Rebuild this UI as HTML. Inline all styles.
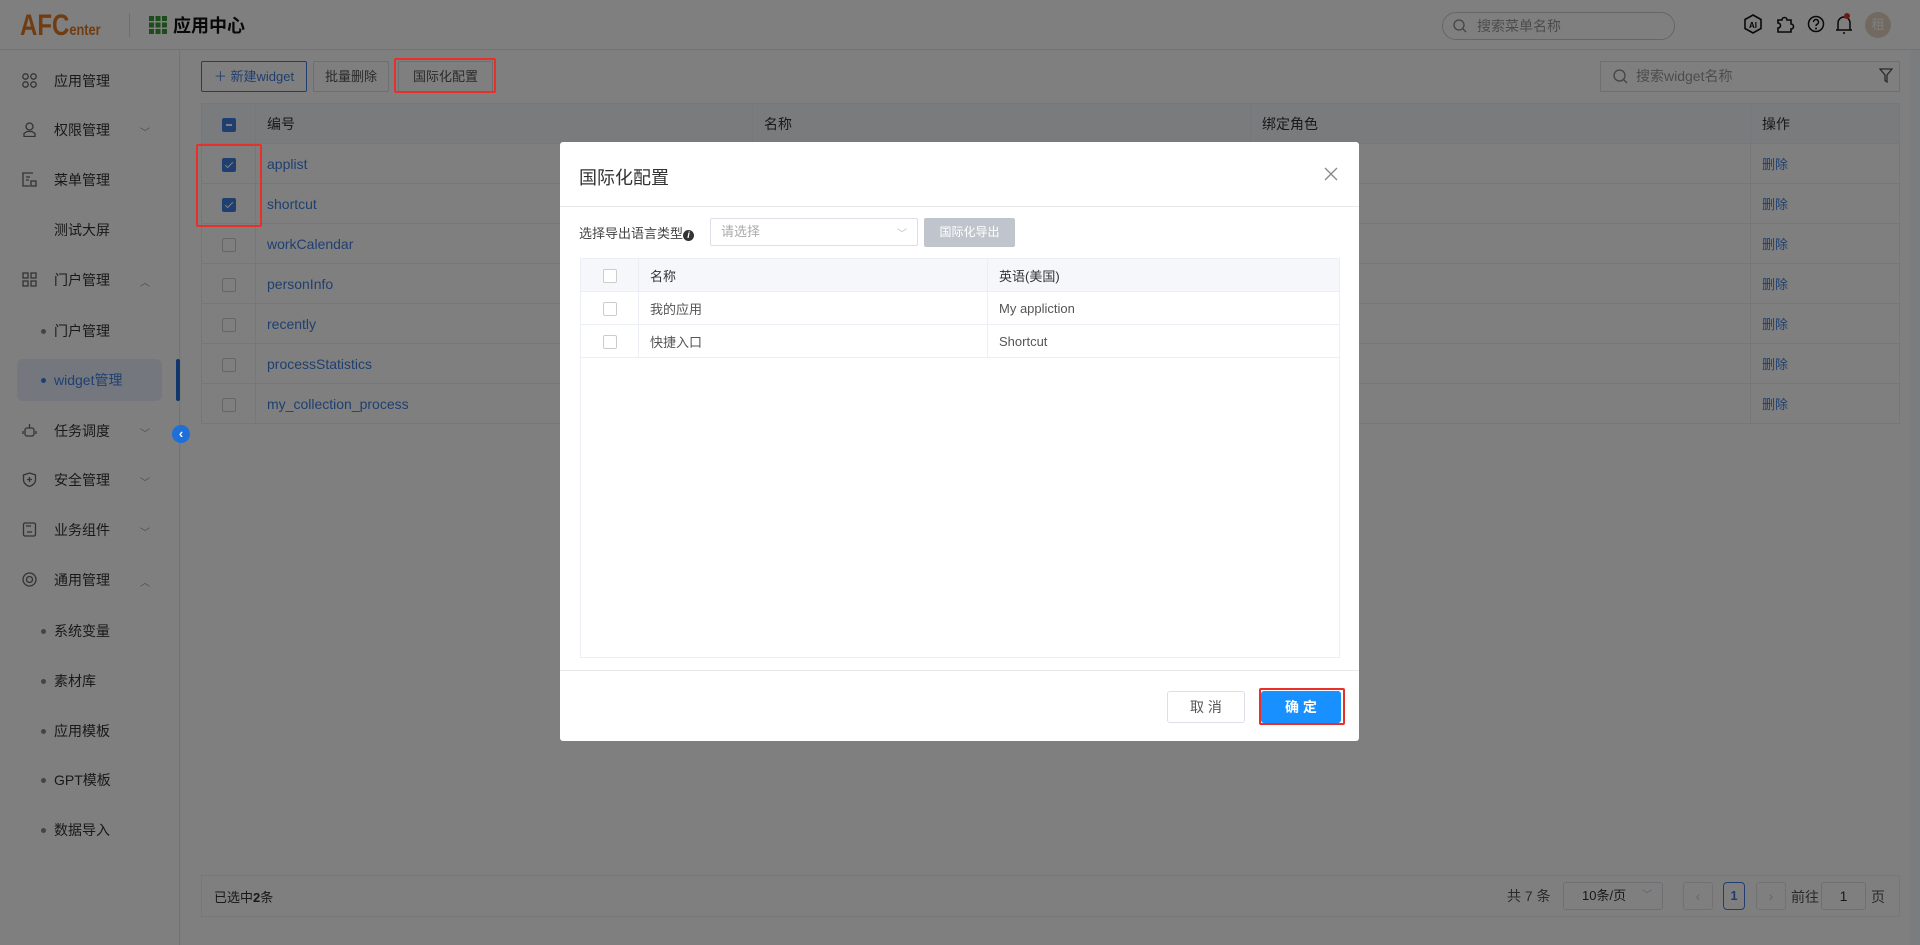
<!DOCTYPE html>
<html><head><meta charset="utf-8"><style>
*{box-sizing:border-box;margin:0;padding:0}
body{width:1920px;height:945px;overflow:hidden;font-family:"Liberation Sans","Noto Sans CJK SC",sans-serif;font-size:14px;color:#333;background:#f7f8fa;position:relative}
.abs{position:absolute}
.hdr{left:0;top:0;width:1920px;height:50px;background:#fff;border-bottom:1px solid #e4e4e4}
.side{left:0;top:50px;width:180px;height:895px;background:#fff;border-right:1px solid #e8e8e8}
.mi{position:absolute;left:0;width:180px;height:30px;line-height:30px;font-size:14px;color:#333}
.mi .t{position:absolute;left:54px}
.mi .ic{position:absolute;left:22px;top:7px;width:15px;height:15px}
.mi .ch{position:absolute;left:140px;top:4px;font-size:10px;color:#999}
.sub .t{left:54px}
.sub .d{position:absolute;left:41px;top:13px;width:5px;height:5px;border-radius:50%;background:#888}
.card{left:181px;top:50px;width:1729px;height:895px;background:#fff}
.btn{position:absolute;top:61px;height:31px;border:1px solid #dcdfe6;background:#fff;font-size:13px;line-height:29px;text-align:center;color:#555;border-radius:2px}
table{border-collapse:collapse;position:absolute}
.mt{left:201px;top:103px;width:1699px}
.mt td{height:40px;border:1px solid #ebeef5;padding-left:11px;font-size:14px}
.mt tr:first-child td{background:#f5f7fa;color:#333}
.mt td.c{padding:0;text-align:center;width:54px}
.cb{display:inline-block;width:14px;height:14px;border:1px solid #ccc;border-radius:2px;background:#fff;vertical-align:middle;position:relative}
.cb.on{background:#3f7fe0;border-color:#3f7fe0}
.cb.on:after{content:"";position:absolute;left:4px;top:1px;width:3px;height:7px;border:solid #fff;border-width:0 1.5px 1.5px 0;transform:rotate(45deg)}
.cb.ind{background:#3f7fe0;border-color:#3f7fe0}
.cb.ind:after{content:"";position:absolute;left:3px;top:5.5px;width:6px;height:1.5px;background:#fff}
.lk{color:#3f7fe0}
.ov{left:0;top:0;width:1920px;height:945px;background:rgba(0,0,0,.5)}
.red{position:absolute;border:2px solid #e8302a;border-radius:2px}
.modal{left:560px;top:142px;width:799px;height:599px;background:#fff;border-radius:3px}
.modal .mtb{left:20px;top:116px;width:760px;height:400px;border:1px solid #ebeef5}
.mtb2 td{height:33px;border:1px solid #ebeef5;padding-left:11px;font-size:13px;color:#555}
.mtb2 tr:first-child td{background:#f5f7fa;color:#333}
</style></head><body>
<div class="abs hdr">
 <div class="abs" style="left:20px;top:9px;font-size:30px;font-weight:bold;color:#e07a26;transform:scaleX(.8);transform-origin:left top;font-family:'Liberation Sans Narrow','Liberation Sans',sans-serif">AFC<span style="font-size:16px">enter</span></div>
 <div class="abs" style="left:129px;top:13px;width:1px;height:24px;background:#ddd"></div>
 <svg class="abs" style="left:149px;top:16px" width="18" height="18"><g fill="#3a9a3a"><rect x="0" y="0" width="5" height="5"/><rect x="6.5" y="0" width="5" height="5"/><rect x="13" y="0" width="5" height="5"/><rect x="0" y="6.5" width="5" height="5"/><rect x="6.5" y="6.5" width="5" height="5"/><rect x="13" y="6.5" width="5" height="5"/><rect x="0" y="13" width="5" height="5"/><rect x="6.5" y="13" width="5" height="5"/><rect x="13" y="13" width="5" height="5"/></g></svg>
 <div class="abs" style="left:173px;top:12px;font-size:18px;font-weight:bold;color:#111">应用中心</div>
 <div class="abs" style="left:1442px;top:12px;width:233px;height:28px;border:1px solid #ccc;border-radius:14px;font-size:14px;color:#999;line-height:26px;padding-left:34px">搜索菜单名称
  <svg class="abs" style="left:10px;top:6px" width="14" height="14"><circle cx="6" cy="6" r="5" fill="none" stroke="#888" stroke-width="1.3"/><path d="M10 10l3 3" stroke="#888" stroke-width="1.3"/></svg></div>
 <svg class="abs" style="left:1743px;top:14px" width="20" height="20"><path d="M10 1l8 4.5v9L10 19 2 14.5v-9z" fill="none" stroke="#111" stroke-width="1.6"/><text x="10" y="14" font-size="8" text-anchor="middle" font-family="Liberation Sans" font-weight="bold">AI</text></svg>
 <svg class="abs" style="left:1775px;top:14px" width="20" height="20"><path d="M3 6h4a2.5 2.5 0 1 1 5 0h4v4a2.5 2.5 0 1 1 0 5v3H3v-4a2.5 2.5 0 1 0 0-5z" fill="none" stroke="#111" stroke-width="1.6"/></svg>
 <svg class="abs" style="left:1807px;top:15px" width="18" height="18"><circle cx="9" cy="9" r="7.5" fill="none" stroke="#111" stroke-width="1.5"/><path d="M6.5 7a2.5 2.5 0 1 1 3.5 2.3c-.8.4-1 .9-1 1.7" fill="none" stroke="#111" stroke-width="1.5"/><circle cx="9" cy="13.5" r="1" fill="#111"/></svg>
 <svg class="abs" style="left:1835px;top:12px" width="18" height="24"><path d="M3 18V11a6 6 0 0 1 12 0v7M1 18h16M8 21h2" fill="none" stroke="#111" stroke-width="1.5"/><circle cx="12" cy="4" r="3" fill="#e0302a"/></svg>
 <div class="abs" style="left:1865px;top:12px;width:26px;height:26px;border-radius:50%;background:#e5d3c3;color:#fff;font-size:13px;text-align:center;line-height:26px">租</div>
</div>
<div class="abs side">
 <div class="mi" style="top:16px"><svg class="ic"><g fill="none" stroke="#666" stroke-width="1.3"><circle cx="3.5" cy="3.5" r="2.7"/><circle cx="11.5" cy="3.5" r="2.7"/><circle cx="3.5" cy="11.5" r="2.7"/><circle cx="11.5" cy="11.5" r="2.7"/></g></svg><span class="t">应用管理</span></div>
 <div class="mi" style="top:65px"><svg class="ic"><g fill="none" stroke="#666" stroke-width="1.3"><circle cx="7.5" cy="4.5" r="3.5"/><path d="M2 14.5v-3l3-2h5l3 2v3z"/></g></svg><span class="t">权限管理</span><span class="ch">﹀</span></div>
 <div class="mi" style="top:115px"><svg class="ic"><g fill="none" stroke="#666" stroke-width="1.3"><path d="M11 1H1v13h7M4 5h4M4 8h3"/><rect x="9" y="9" width="5" height="5"/></g></svg><span class="t">菜单管理</span></div>
 <div class="mi" style="top:165px"><span class="t">测试大屏</span></div>
 <div class="mi" style="top:215px"><svg class="ic"><g fill="none" stroke="#666" stroke-width="1.3"><rect x="1" y="1" width="5" height="5"/><rect x="9" y="1" width="5" height="5"/><rect x="1" y="9" width="5" height="5"/><rect x="9" y="9" width="5" height="5"/></g></svg><span class="t">门户管理</span><span class="ch">︿</span></div>
 <div class="mi sub" style="top:266px"><span class="d"></span><span class="t">门户管理</span></div>
 <div class="abs" style="left:17px;top:309px;width:145px;height:42px;border-radius:6px;background:#e8f0fc"></div>
 <div class="abs" style="left:176px;top:309px;width:4px;height:42px;background:#1e6fd9;border-radius:2px"></div>
 <div class="mi sub" style="top:315px;color:#3f7fe0;width:160px"><span class="d" style="background:#3f7fe0"></span><span class="t">widget管理</span></div>
 <div class="mi" style="top:366px"><svg class="ic"><g fill="none" stroke="#666" stroke-width="1.3"><rect x="3" y="5" width="9" height="8" rx="2"/><path d="M7.5 1v4M1 8v3M14 8v3"/></g></svg><span class="t">任务调度</span><span class="ch">﹀</span></div>
 <div class="mi" style="top:415px"><svg class="ic"><g fill="none" stroke="#666" stroke-width="1.3"><path d="M7.5 1l6 2v5c0 3-3 5.5-6 6.5-3-1-6-3.5-6-6.5V3z M7.5 5v5M5 7.5h5"/></g></svg><span class="t">安全管理</span><span class="ch">﹀</span></div>
 <div class="mi" style="top:465px"><svg class="ic"><g fill="none" stroke="#666" stroke-width="1.3"><rect x="1.5" y="1" width="12" height="13" rx="1.5"/><path d="M4 4h5M5 10h5"/></g></svg><span class="t">业务组件</span><span class="ch">﹀</span></div>
 <div class="mi" style="top:515px"><svg class="ic"><g fill="none" stroke="#666" stroke-width="1.3"><circle cx="7.5" cy="7.5" r="6.5"/><circle cx="7.5" cy="7.5" r="3"/></g></svg><span class="t">通用管理</span><span class="ch">︿</span></div>
 <div class="mi sub" style="top:566px"><span class="d"></span><span class="t">系统变量</span></div>
 <div class="mi sub" style="top:616px"><span class="d"></span><span class="t">素材库</span></div>
 <div class="mi sub" style="top:666px"><span class="d"></span><span class="t">应用模板</span></div>
 <div class="mi sub" style="top:715px"><span class="d"></span><span class="t">GPT模板</span></div>
 <div class="mi sub" style="top:765px"><span class="d"></span><span class="t">数据导入</span></div>
</div>
<div class="abs card"></div>
<div class="btn" style="left:201px;width:106px;border-color:#3f7fe0;color:#3f7fe0">＋ 新建widget</div>
<div class="btn" style="left:313px;width:76px">批量删除</div>
<div class="btn" style="left:398px;width:95px">国际化配置</div>
<div class="abs" style="left:1600px;top:61px;width:300px;height:31px;border:1px solid #dcdfe6;font-size:14px;color:#999;line-height:29px;padding-left:35px">搜索widget名称
 <svg class="abs" style="left:12px;top:7px" width="15" height="15"><circle cx="6.5" cy="6.5" r="5.5" fill="none" stroke="#888" stroke-width="1.3"/><path d="M10.5 10.5l3.5 3.5" stroke="#888" stroke-width="1.3"/></svg>
 <svg class="abs" style="left:278px;top:6px" width="14" height="16"><path d="M1 1h12l-5 6v7l-2-1.5V7z" fill="none" stroke="#555" stroke-width="1.3"/></svg></div>
<table class="mt">
<tr><td class="c"><span class="cb ind"></span></td><td style="width:497px">编号</td><td style="width:498px">名称</td><td style="width:500px">绑定角色</td><td>操作</td></tr>
<tr><td class="c"><span class="cb on"></span></td><td class="lk">applist</td><td></td><td></td><td class="lk" style="font-size:13px">删除</td></tr>
<tr><td class="c"><span class="cb on"></span></td><td class="lk">shortcut</td><td></td><td></td><td class="lk" style="font-size:13px">删除</td></tr>
<tr><td class="c"><span class="cb"></span></td><td class="lk">workCalendar</td><td></td><td></td><td class="lk" style="font-size:13px">删除</td></tr>
<tr><td class="c"><span class="cb"></span></td><td class="lk">personInfo</td><td></td><td></td><td class="lk" style="font-size:13px">删除</td></tr>
<tr><td class="c"><span class="cb"></span></td><td class="lk">recently</td><td></td><td></td><td class="lk" style="font-size:13px">删除</td></tr>
<tr><td class="c"><span class="cb"></span></td><td class="lk">processStatistics</td><td></td><td></td><td class="lk" style="font-size:13px">删除</td></tr>
<tr><td class="c"><span class="cb"></span></td><td class="lk">my_collection_process</td><td></td><td></td><td class="lk" style="font-size:13px">删除</td></tr>
</table>
<div class="abs" style="left:201px;top:875px;width:1699px;height:42px;border:1px solid #ebeef5"></div>
<div class="abs" style="left:214px;top:887px;font-size:13px">已选中<b>2</b>条</div>
<div class="abs" style="left:1507px;top:886px;font-size:14px;color:#555">共 7 条</div>
<div class="abs" style="left:1563px;top:882px;width:100px;height:28px;border:1px solid #dcdfe6;border-radius:3px;font-size:13px;line-height:26px;padding-left:18px">10条/页<span style="position:absolute;right:10px;color:#bbb;font-size:10px">﹀</span></div>
<div class="abs" style="left:1683px;top:882px;width:30px;height:28px;border:1px solid #e4e4e4;border-radius:3px;color:#ccc;text-align:center;line-height:26px">‹</div>
<div class="abs" style="left:1723px;top:882px;width:22px;height:28px;border:1px solid #3f7fe0;border-radius:4px;color:#3f7fe0;font-weight:bold;text-align:center;line-height:26px;font-size:13px">1</div>
<div class="abs" style="left:1756px;top:882px;width:30px;height:28px;border:1px solid #e4e4e4;border-radius:3px;color:#ccc;text-align:center;line-height:26px">›</div>
<div class="abs" style="left:1791px;top:887px;font-size:14px;color:#555">前往</div>
<div class="abs" style="left:1821px;top:882px;width:45px;height:28px;border:1px solid #dcdfe6;border-radius:3px;text-align:center;line-height:26px">1</div>
<div class="abs" style="left:1871px;top:887px;font-size:14px;color:#555">页</div>
<div class="abs ov"></div>
<div class="red" style="left:394px;top:58px;width:102px;height:35px"></div>
<div class="red" style="left:196px;top:144px;width:66px;height:83px"></div>
<div class="abs" style="left:172px;top:425px;width:18px;height:18px;border-radius:50%;background:#1e6fd9;color:#fff;font-size:13px;line-height:17px;text-align:center;font-weight:bold">‹</div>
<div class="abs modal">
 <div class="abs" style="left:19px;top:22px;font-size:18px;color:#333">国际化配置</div>
 <svg class="abs" style="left:764px;top:25px" width="14" height="14"><path d="M1 1l12 12M13 1L1 13" stroke="#888" stroke-width="1.3"/></svg>
 <div class="abs" style="left:0;top:64px;width:799px;height:1px;background:#e8e8e8"></div>
 <div class="abs" style="left:19px;top:81px;font-size:13px;color:#444">选择导出语言类型<span style="display:inline-block;width:11px;height:11px;border-radius:50%;background:#333;color:#fff;font-size:9px;line-height:11px;text-align:center;font-style:italic;font-weight:bold;vertical-align:0px">i</span></div>
 <div class="abs" style="left:150px;top:76px;width:208px;height:28px;border:1px solid #dcdfe6;border-radius:2px;font-size:13px;color:#aaa;line-height:26px;padding-left:10px">请选择<span style="position:absolute;right:10px;top:3px;color:#bbb;font-size:10px">﹀</span></div>
 <div class="abs" style="left:364px;top:76px;width:91px;height:29px;background:#c0c4cc;color:#fff;font-size:12px;line-height:29px;text-align:center;border-radius:2px">国际化导出</div>
 <div class="abs mtb"></div>
 <table class="mtb2" style="left:20px;top:116px;width:760px">
  <tr><td style="width:58px;padding:0;text-align:center"><span class="cb"></span></td><td style="width:349px">名称</td><td>英语(美国)</td></tr>
  <tr><td style="padding:0;text-align:center"><span class="cb"></span></td><td>我的应用</td><td>My appliction</td></tr>
  <tr><td style="padding:0;text-align:center"><span class="cb"></span></td><td>快捷入口</td><td>Shortcut</td></tr>
 </table>
 <div class="abs" style="left:0;top:528px;width:799px;height:1px;background:#e8e8e8"></div>
 <div class="abs" style="left:607px;top:549px;width:78px;height:32px;border:1px solid #dcdfe6;border-radius:3px;text-align:center;line-height:30px;font-size:14px;color:#555">取 消</div>
 <div class="abs" style="left:701px;top:549px;width:80px;height:32px;background:#1890ff;border-radius:3px;text-align:center;line-height:32px;font-size:14px;color:#fff;font-weight:bold">确 定</div>
 <div class="red" style="left:699px;top:546px;width:86px;height:37px"></div>
</div>
</body></html>
